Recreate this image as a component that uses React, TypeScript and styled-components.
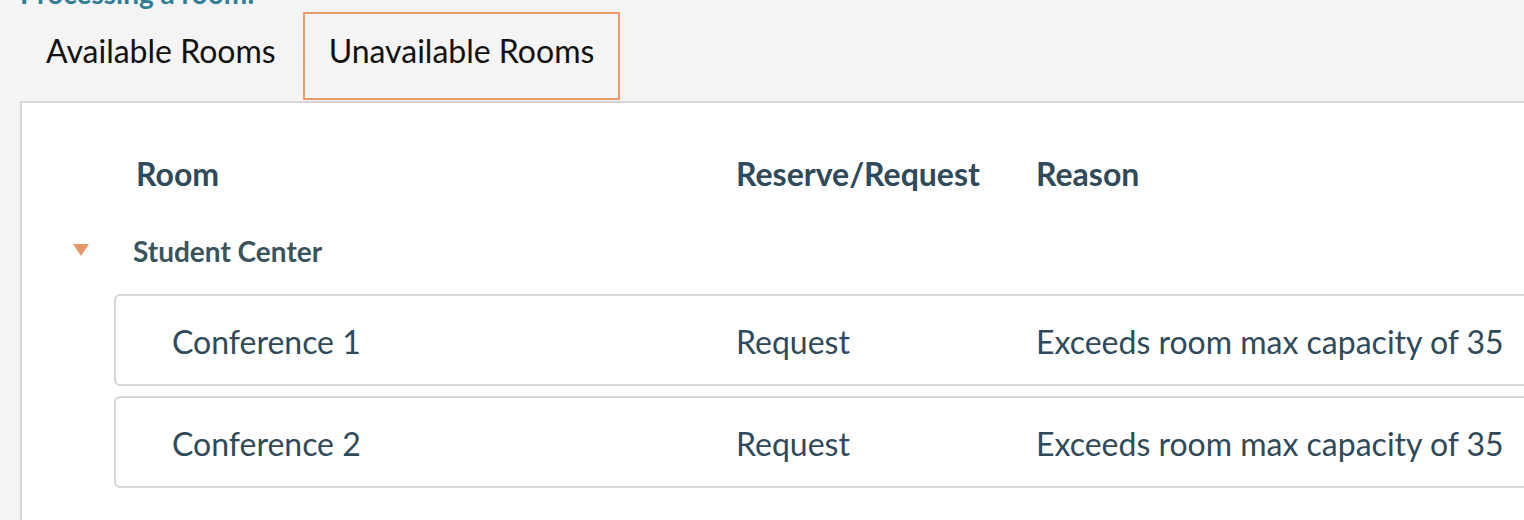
import styled, { createGlobalStyle } from 'styled-components';

const GlobalStyle = createGlobalStyle`
  html, body {
    margin: 0;
    padding: 0;
    background: #f4f4f4;
    font-family: Lato, 'Noto Sans', sans-serif;
    overflow: hidden;
  }
`;

const rooms = [
  { name: 'Conference 1', action: 'Request', reason: 'Exceeds room max capacity of 35' },
  { name: 'Conference 2', action: 'Request', reason: 'Exceeds room max capacity of 35' },
];

const App = () => {
  return (
    <Page>
      <GlobalStyle />
      <Title>Processing a room:</Title>
      <Tabs>
        <Tab>Available Rooms</Tab>
        <Tab $active>Unavailable Rooms</Tab>
      </Tabs>
      <Panel>
        <HeaderRow>
          <HeaderCell>Room</HeaderCell>
          <HeaderCell>Reserve/Request</HeaderCell>
          <HeaderCell>Reason</HeaderCell>
        </HeaderRow>
        <GroupRow>
          <Caret />
          <GroupName>Student Center</GroupName>
        </GroupRow>
        <RoomList>
          {rooms.map((room) => (
            <RoomCard key={room.name}>
              <Cell>{room.name}</Cell>
              <Cell>{room.action}</Cell>
              <Cell>{room.reason}</Cell>
            </RoomCard>
          ))}
        </RoomList>
      </Panel>
    </Page>
  );
};

const Page = styled.div`
  width: 1524px;
  height: 520px;
  padding-left: 20px;
  box-sizing: border-box;
  overflow: hidden;
`;

const Title = styled.h2`
  margin: -22px 0 0 0;
  height: 34px;
  line-height: 30px;
  font-size: 28px;
  font-weight: 700;
  color: #2f7d96;
`;

const Tabs = styled.div`
  display: flex;
  align-items: stretch;
`;

const Tab = styled.div<{ $active?: boolean }>`
  height: 88px;
  box-sizing: border-box;
  padding: 0 24px 12px 24px;
  display: flex;
  align-items: center;
  font-size: 32px;
  color: #111;
  border: 2px solid ${(p) => (p.$active ? '#e99c6b' : 'transparent')};
  margin-left: ${(p) => (p.$active ? '1px' : '0')};
`;

const Panel = styled.div`
  margin-top: 1px;
  background: #fff;
  border-top: 2px solid #d6d6d6;
  border-left: 2px solid #d6d6d6;
  margin-right: -40px;
  padding: 47px 0 40px 0;
  min-height: 500px;
`;

const HeaderRow = styled.div`
  display: grid;
  grid-template-columns: 600px 300px 1fr;
  padding-left: 114px;
  height: 46px;
  align-items: center;
`;

const HeaderCell = styled.div`
  font-size: 32px;
  font-weight: 700;
  color: #2f4a5a;
`;

const GroupRow = styled.div`
  display: flex;
  align-items: center;
  height: 58px;
  margin-top: 26px;
  padding-left: 51px;
`;

const Caret = styled.span`
  width: 0;
  height: 0;
  border-left: 8px solid transparent;
  border-right: 8px solid transparent;
  border-top: 12px solid #e9966a;
  margin-right: 44px;
  margin-top: -2px;
`;

const GroupName = styled.div`
  font-size: 28px;
  font-weight: 700;
  color: #3a545e;
`;

const RoomList = styled.div`
  display: flex;
  flex-direction: column;
  gap: 10px;
  padding-left: 92px;
  margin-top: 14px;
`;

const RoomCard = styled.div`
  display: grid;
  grid-template-columns: 564px 300px 1fr;
  align-items: center;
  height: 92px;
  box-sizing: border-box;
  padding: 3px 0 0 56px;
  border: 2px solid #d6d6d6;
  border-radius: 6px;
`;

const Cell = styled.div`
  font-size: 32px;
  color: #2f4a5a;
  white-space: nowrap;
`;

export default App;
